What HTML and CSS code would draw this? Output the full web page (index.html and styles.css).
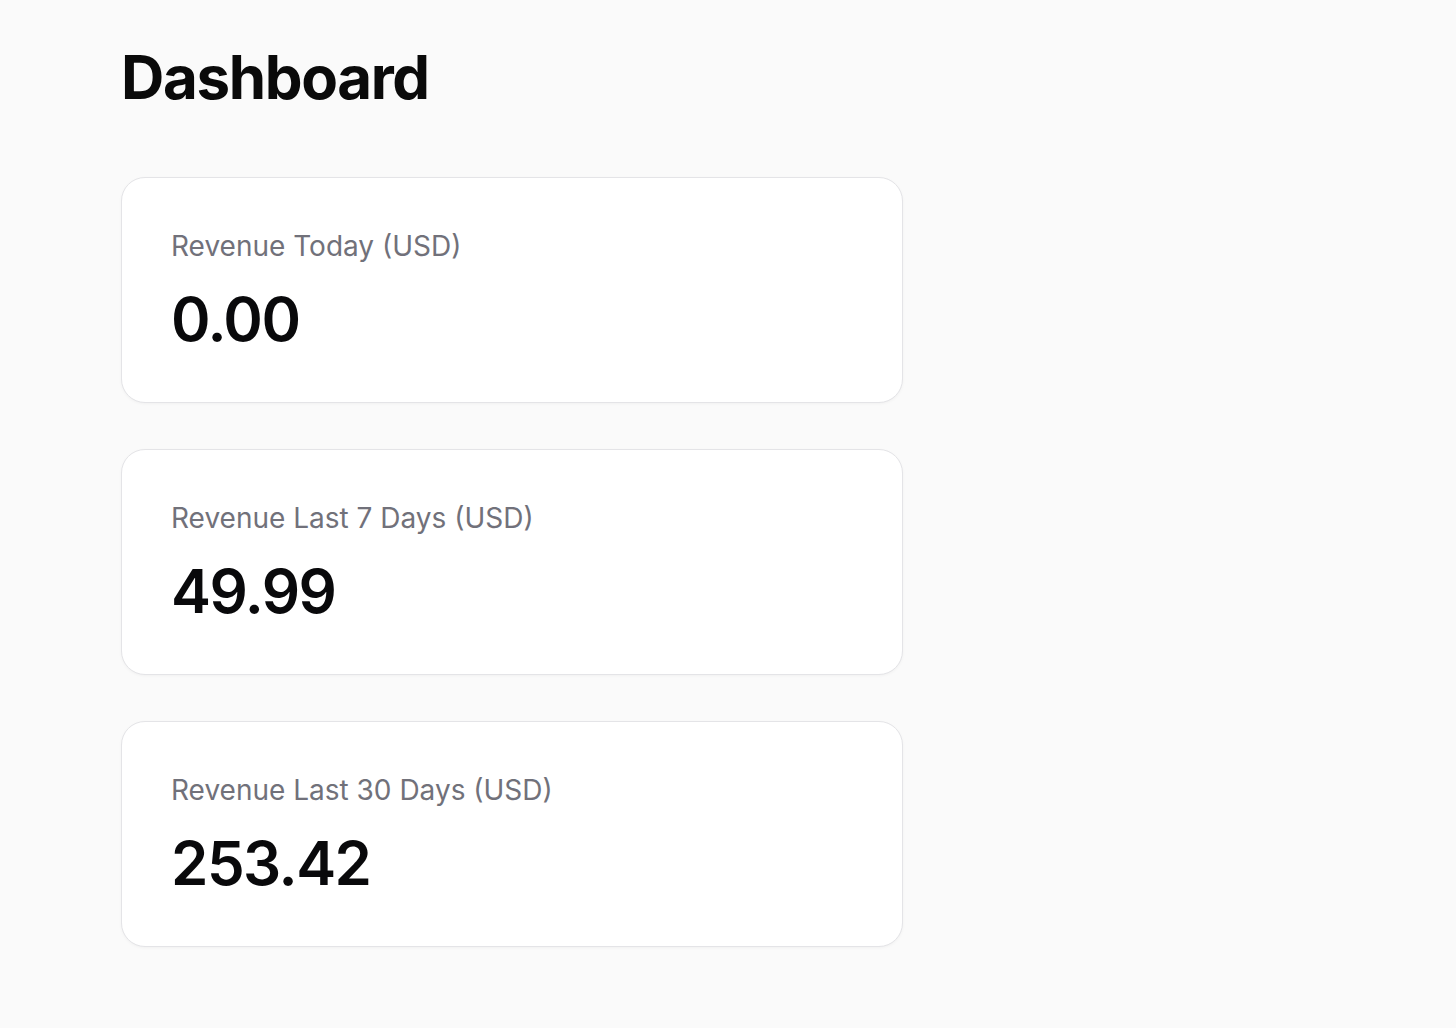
FILE: index.html
```html
<!DOCTYPE html>
<html lang="en">
<head>
<meta charset="utf-8">
<title>Dashboard</title>
<link rel="stylesheet" href="styles.css">
</head>
<body>
<main class="page">
  <h1 class="title">Dashboard</h1>
  <section class="cards">
    <div class="card">
      <div class="label">Revenue Today (USD)</div>
      <div class="value">0.00</div>
    </div>
    <div class="card">
      <div class="label">Revenue Last 7 Days (USD)</div>
      <div class="value">49.99</div>
    </div>
    <div class="card">
      <div class="label">Revenue Last 30 Days (USD)</div>
      <div class="value">253.42</div>
    </div>
  </section>
</main>
</body>
</html>
```
FILE: styles.css
```css
html, body {
  margin: 0;
  padding: 0;
  background: #fafafa;
}
body {
  font-family: Inter, "Noto Sans", sans-serif;
  color: #0a0a0a;
}
.page {
  padding: 41px 120px 40px 121px;
  width: 782px;
}
.title {
  margin: 0;
  font-size: 60px;
  line-height: 72px;
  font-weight: 700;
  letter-spacing: -1.35px;
  color: #0a0a0a;
}
.cards {
  margin-top: 64px;
  display: flex;
  flex-direction: column;
  gap: 46px;
}
.card {
  background: #fff;
  border: 1px solid #e4e4e7;
  border-radius: 24px;
  padding: 48px 48px 47px 49px;
  box-shadow: 0 1px 3px rgba(0,0,0,0.04);
}
.label {
  font-size: 28px;
  line-height: 40px;
  color: #71717a;
  font-weight: 400;
}
.value {
  margin-top: 17px;
  font-size: 60px;
  line-height: 72px;
  font-weight: 600;
  letter-spacing: -1.5px;
  color: #09090b;
}
```
